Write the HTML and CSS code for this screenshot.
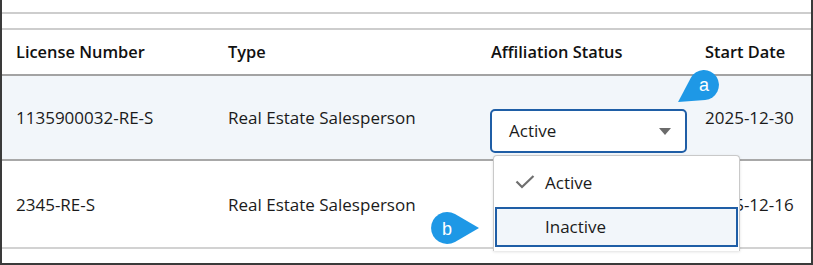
FILE: index.html
```html
<!DOCTYPE html>
<html>
<head>
  <title>Affiliations</title>
  <link rel="stylesheet" href="styles.css">
</head>
<body>

<div class="frame">
  <div class="strip strip-top"></div>
  <div class="strip strip-second"></div>

  <div class="grid-row head-row">
    <div class="cell">License Number</div>
    <div class="cell">Type</div>
    <div class="cell">Affiliation Status</div>
    <div class="cell">Start Date</div>
  </div>

  <div class="grid-row body-row selected">
    <div class="cell">1135900032-RE-S</div>
    <div class="cell">Real Estate Salesperson</div>
    <div class="cell select-cell">
      <div class="select">
        <span>Active</span>
        <span class="caret"></span>
      </div>
    </div>
    <div class="cell">2025-12-30</div>
  </div>

  <div class="grid-row body-row last">
    <div class="cell">2345-RE-S</div>
    <div class="cell">Real Estate Salesperson</div>
    <div class="cell"></div>
    <div class="cell">2025-12-16</div>
  </div>

  <div class="menu">
    <div class="option checked">
      <svg class="check" width="20" height="14" viewBox="0 0 20 14">
        <path d="M1.5 6.5 L7 12 L18.5 1" fill="none" stroke="#6f6f6f" stroke-width="2.2"/>
      </svg>
      <span>Active</span>
    </div>
    <div class="option focused"><span>Inactive</span></div>
  </div>

  <svg class="callout callout-a" width="50" height="44" viewBox="0 0 50 44">
    <g transform="translate(31 18) rotate(146.8)">
      <path d="M31 0 L7.2 -13.2 A15 15 0 1 0 7.2 13.2 Z" fill="#1e98e6"/>
    </g>
    <text x="31" y="24" text-anchor="middle">a</text>
  </svg>

  <svg class="callout callout-b" width="54" height="36" viewBox="0 0 54 36">
    <path d="M50 18 L26 4.1 A16 16 0 1 0 26 31.9 Z" fill="#1e98e6"/>
    <text x="18" y="24.5" text-anchor="middle">b</text>
  </svg>
</div>

</body>
</html>
```

FILE: styles.css
```css
body {
  margin: 0;
  font-family: "Open Sans", "Noto Sans", sans-serif;
  font-size: 17px;
  color: #1b1b1b;
  background: #fff;
}

.frame {
  position: relative;
  box-sizing: border-box;
  width: 813px;
  height: 265px;
  border: solid 2px #3a3a3a;
  border-top: none;
  overflow: hidden;
}

.strip {
  border-bottom: solid 2px #cdcdcd;
}

.strip-top {
  height: 12px;
}

.strip-second {
  height: 14px;
}

.grid-row {
  display: grid;
  grid-template-columns: 212px 263px 214px 1fr;
}

.cell {
  padding-left: 14px;
  line-height: 22px;
  white-space: nowrap;
}

.head-row {
  height: 44px;
  align-items: center;
  font-size: 16.4px;
  font-weight: 600;
  color: #111;
  border-bottom: solid 2px #a3a3a3;
}

.body-row {
  height: 85px;
  box-sizing: border-box;
  padding-top: 31px;
  border-bottom: solid 2px #a8a8a8;
}

.body-row.selected {
  background: #f2f6fa;
}

.body-row.last {
  height: 88px;
  padding-top: 33px;
  border-bottom: solid 2px #d2d2d2;
}

.select-cell {
  padding-left: 13px;
}

.select {
  box-sizing: border-box;
  width: 197px;
  height: 44px;
  margin-top: 2px;
  padding: 0 14px 0 17px;
  border: solid 2px #1f5ea6;
  border-radius: 5px;
  background: #fff;
  display: flex;
  align-items: center;
  justify-content: space-between;
}

.caret {
  width: 0;
  height: 0;
  border-left: solid 6px transparent;
  border-right: solid 6px transparent;
  border-top: solid 7px #6b6b6b;
  margin-top: 1px;
}

.menu {
  position: absolute;
  left: 491px;
  top: 155px;
  box-sizing: border-box;
  width: 247px;
  height: 96px;
  padding: 0 1px;
  background: #fff;
  border: solid 1px #c9c9c9;
  border-bottom: none;
  border-radius: 4px 4px 0 0;
  box-shadow: 0 1px 3px rgba(0, 0, 0, .12);
}

.option {
  position: relative;
  height: 40px;
  padding-left: 50px;
  display: flex;
  align-items: center;
  line-height: 22px;
}

.option.checked {
  height: 51px;
  padding-top: 2px;
  box-sizing: border-box;
}

.check {
  position: absolute;
  left: 20px;
  top: 19px;
}

.option.focused {
  box-sizing: border-box;
  height: 40px;
  border: solid 2px #1f5ea6;
  background: #f2f6fa;
  padding-left: 48px;
}

.callout {
  position: absolute;
}

.callout text {
  fill: #fff;
  font-family: "Liberation Sans", Arial, sans-serif;
  font-size: 18px;
}

.callout-a {
  left: 671px;
  top: 67px;
}

.callout-b {
  left: 427px;
  top: 210px;
}
```
